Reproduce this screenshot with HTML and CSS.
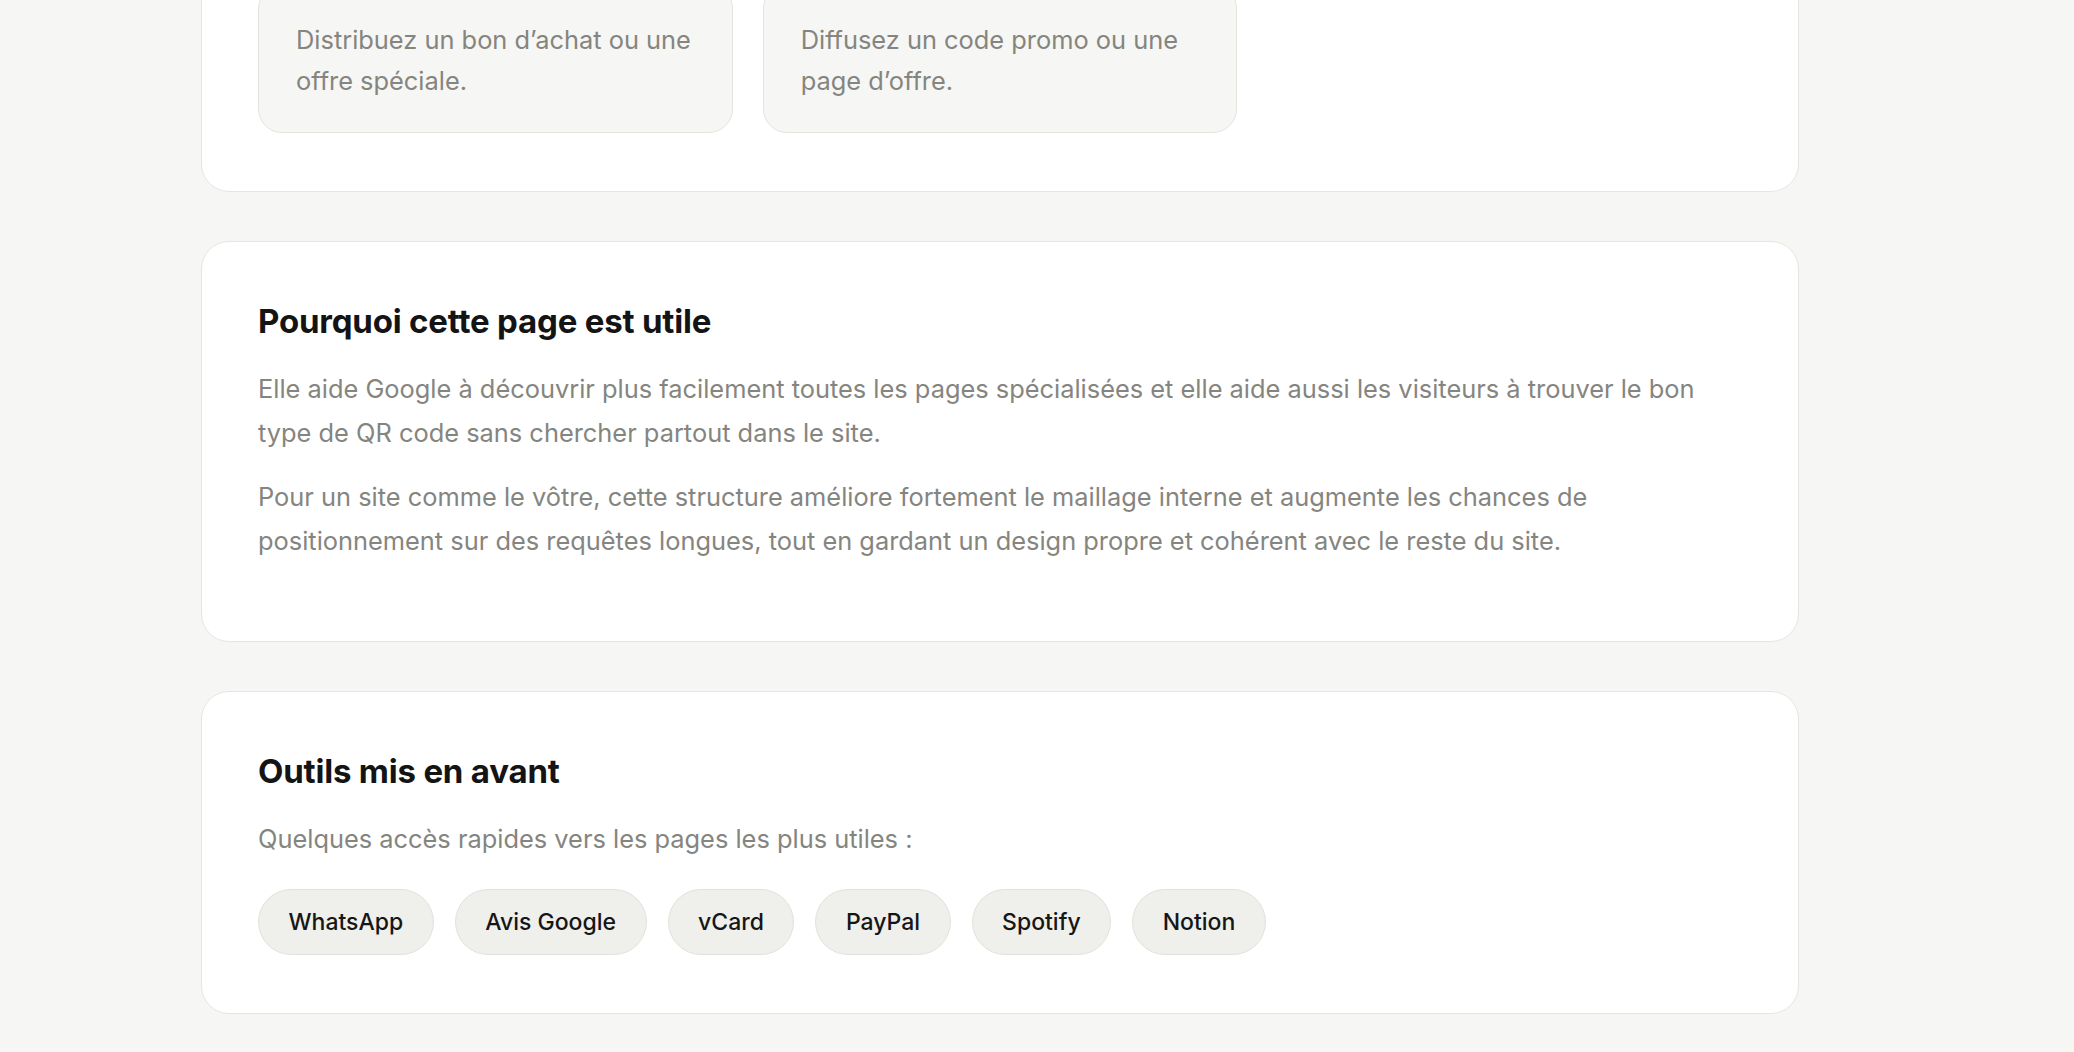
FILE: index.html
```html
<!DOCTYPE html>
<html lang="fr">
<head>
<meta charset="utf-8">
<title>Types de QR code</title>
<link rel="stylesheet" href="styles.css">
</head>
<body>
<main class="page">
  <section class="panel panel-types">
    <div class="type-grid">
      <div class="type-card">
        <p class="type-desc">Distribuez un bon d’achat ou une offre spéciale.</p>
      </div>
      <div class="type-card">
        <p class="type-desc">Diffusez un code promo ou une page d’offre.</p>
      </div>
    </div>
  </section>

  <section class="panel">
    <h2 class="panel-title">Pourquoi cette page est utile</h2>
    <p class="panel-text">Elle aide Google à découvrir plus facilement toutes les pages spécialisées et elle aide aussi les visiteurs à trouver le bon type de QR code sans chercher partout dans le site.</p>
    <p class="panel-text">Pour un site comme le vôtre, cette structure améliore fortement le maillage interne et augmente les chances de positionnement sur des requêtes longues, tout en gardant un design propre et cohérent avec le reste du site.</p>
  </section>

  <section class="panel">
    <h2 class="panel-title">Outils mis en avant</h2>
    <p class="panel-text panel-lead">Quelques accès rapides vers les pages les plus utiles :</p>
    <div class="pill-row">
      <a class="pill" href="#">WhatsApp</a>
      <a class="pill" href="#">Avis Google</a>
      <a class="pill" href="#">vCard</a>
      <a class="pill" href="#">PayPal</a>
      <a class="pill" href="#">Spotify</a>
      <a class="pill" href="#">Notion</a>
    </div>
  </section>
</main>
</body>
</html>
```
FILE: styles.css
```css
* { box-sizing: border-box; }

html, body {
  margin: 0;
  padding: 0;
  background: #f6f6f4;
}

body {
  font-family: "Inter", "Noto Sans", sans-serif;
  color: #151515;
  overflow: hidden;
}

/* page is shown scrolled: the top of the first panel lies above the view */
.page {
  width: 1598px;
  margin: -73px 0 0 201px;
  display: flex;
  flex-direction: column;
  gap: 49px;
}

.panel {
  background: #ffffff;
  border: 1px solid #e5e5e1;
  border-radius: 28px;
  padding: 57px 56px 58px;
}

.type-grid {
  display: grid;
  grid-template-columns: repeat(3, 1fr);
  gap: 30px;
}

.type-card {
  background: #f6f6f4;
  border: 1px solid #e4e4df;
  border-radius: 24px;
  padding: 33px 30px 31px 37px;
}

.type-desc {
  margin: 0;
  font-size: 25.4px;
  line-height: 41px;
  color: #85857f;
}

.panel-title {
  margin: 0 0 24px;
  font-size: 33px;
  line-height: 44px;
  font-weight: 700;
  letter-spacing: -0.2px;
  color: #141414;
}

.panel-text {
  margin: 0 0 20px;
  font-size: 25.4px;
  line-height: 44px;
  color: #85857f;
}

.panel-lead {
  margin-bottom: 28px;
}

.pill-row {
  display: flex;
  flex-wrap: wrap;
  gap: 21px;
}

.pill {
  display: inline-flex;
  align-items: center;
  height: 66px;
  padding: 0 29.5px;
  border: 1px solid #e2e2dd;
  border-radius: 999px;
  background: #efefeb;
  color: #161616;
  font-size: 23px;
  font-weight: 500;
  text-decoration: none;
}
```
